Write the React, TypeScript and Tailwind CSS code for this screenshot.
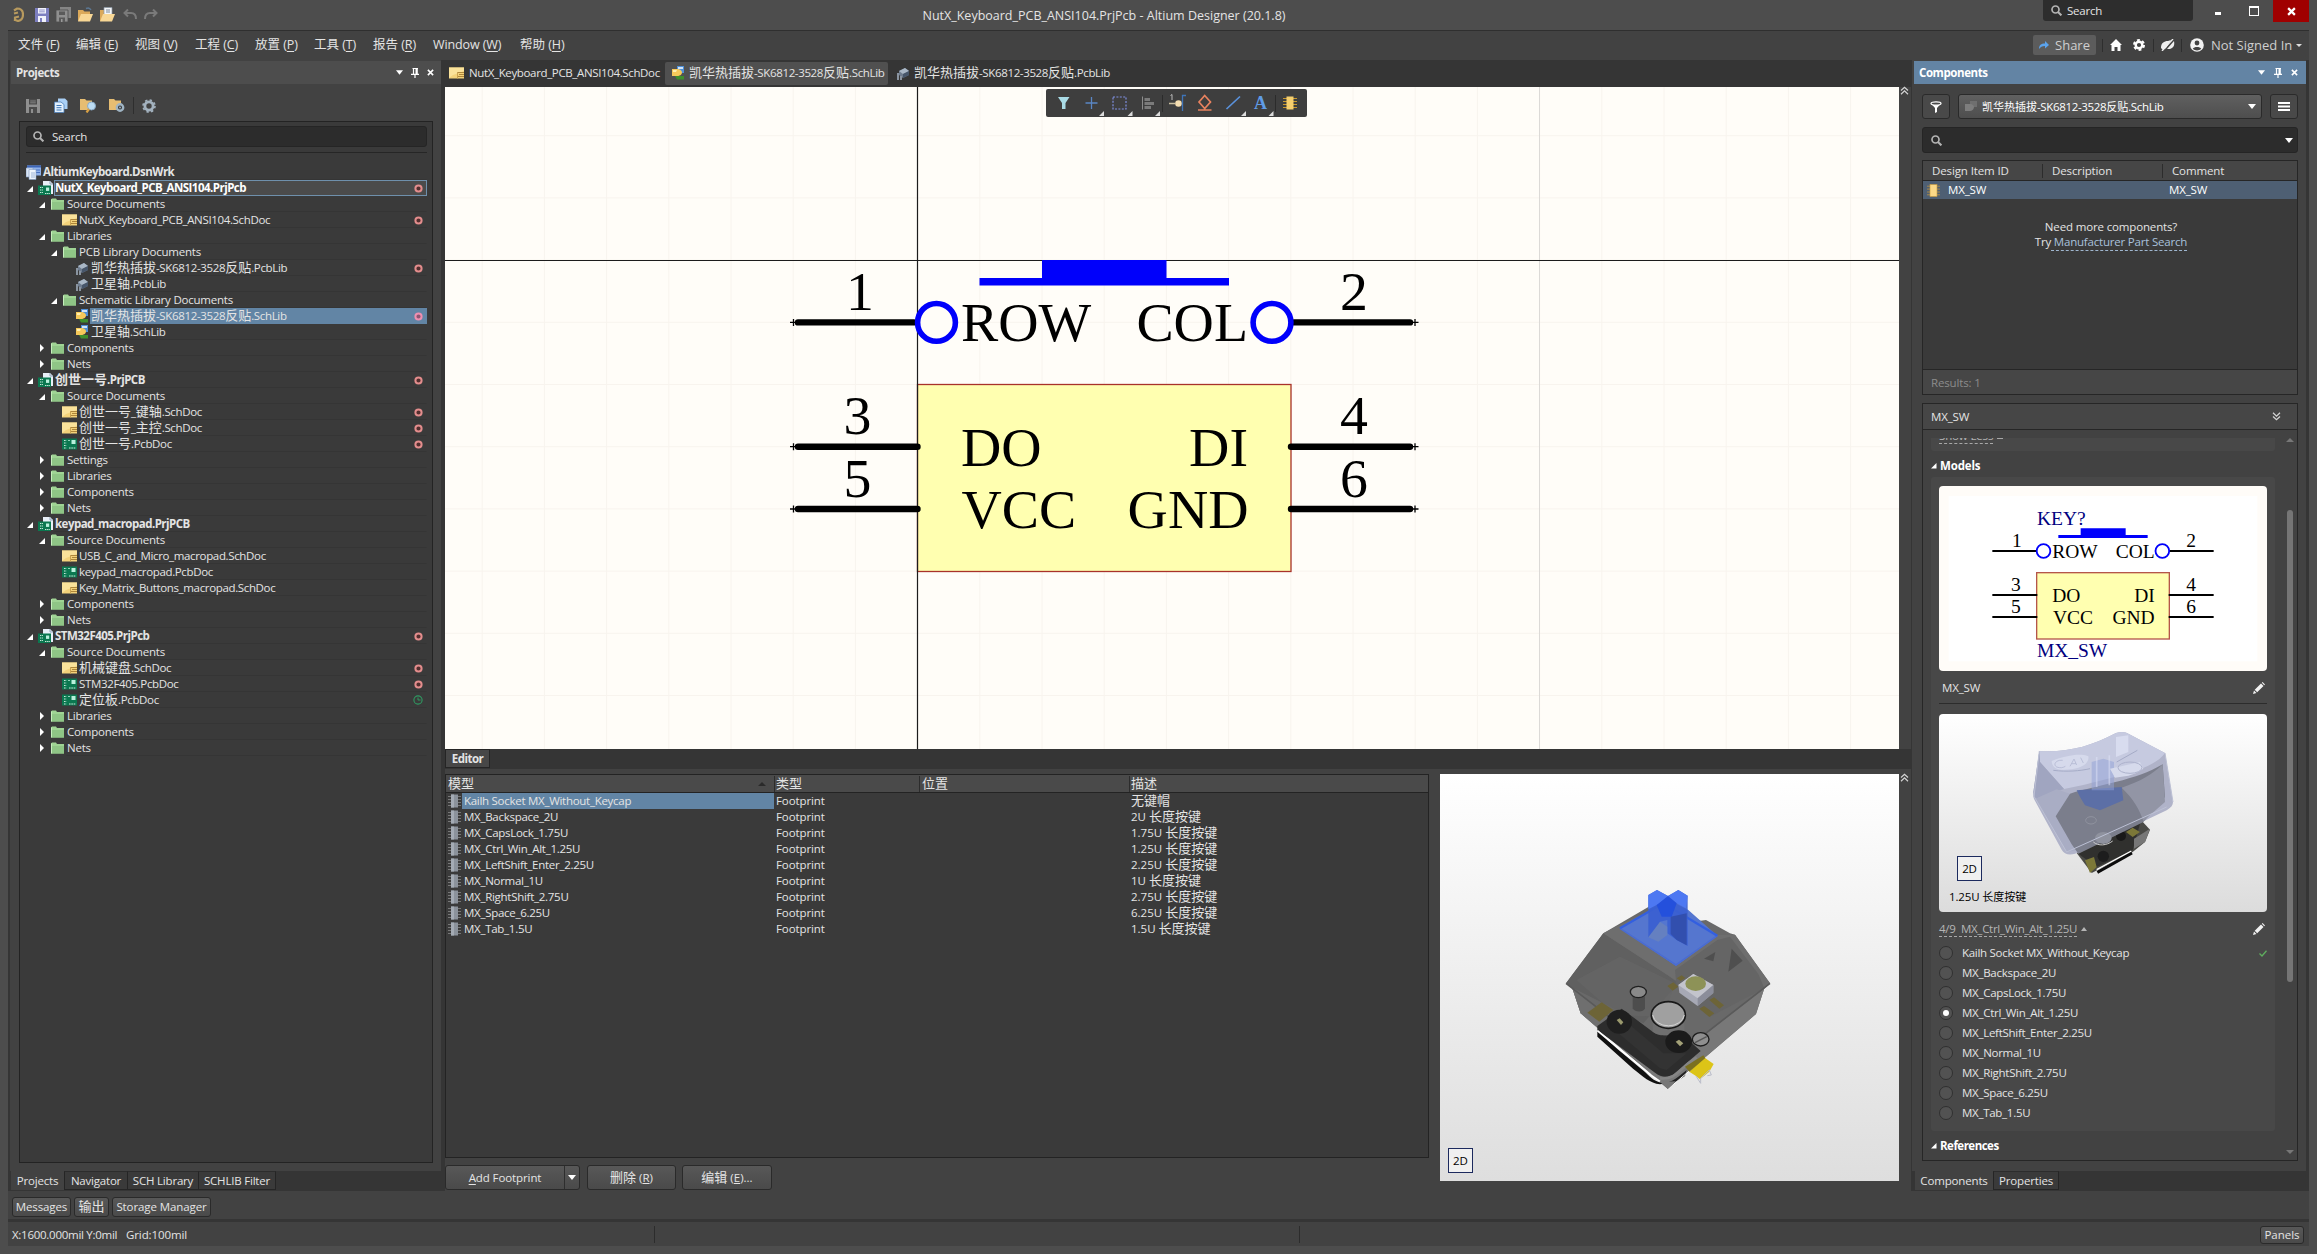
import React from "react";

type Kids = { children?: React.ReactNode };

/* Renders a label, giving Han characters their own size. */
function Mix({ s, han = "text-[13px]" }: { s: string; han?: string }) {
  return (
    <span className="whitespace-pre">
      {s.split(/([\u4e00-\u9fff]+)/).map((p, i) =>
        /[\u4e00-\u9fff]/.test(p) ? (
          <span key={i} className={`font-['Noto_Sans_CJK_SC',sans-serif] tracking-normal leading-none ${han}`}>{p}</span>
        ) : (
          p
        ),
      )}
    </span>
  );
}

function Svg({ w, h, vb, className = "", children }: { w: number; h: number; vb?: string; className?: string } & Kids) {
  return (
    <svg width={w} height={h} viewBox={vb ?? `0 0 ${w} ${h}`} className={`shrink-0 block ${className}`} fill="none">
      {children}
    </svg>
  );
}

/* ---------- small icons ---------- */
const Down = ({ c = "#fff", w = 8 }: { c?: string; w?: number }) => (
  <Svg w={w} h={5} vb="0 0 8 5"><path d="M0 0H8L4 5Z" fill={c} /></Svg>
);
const Pin = () => (
  <Svg w={8} h={10}><path d="M1.5 0.5H7M2.5 0.5V6M0 6.3H8M4 6.5V10" stroke="#fff" strokeWidth="1.2" /><path d="M4.5 0H6.8V6H4.5Z" fill="#fff" /></Svg>
);
const Cross = ({ s = 7, sw = 1.8 }: { s?: number; sw?: number }) => (
  <Svg w={s} h={s} vb="0 0 8 8"><path d="M1 1L7 7M7 1L1 7" stroke="#fff" strokeWidth={sw} /></Svg>
);
const Magnifier = ({ s = 11 }: { s?: number }) => (
  <Svg w={s} h={s} vb="0 0 11 11"><circle cx="4.5" cy="4.5" r="3.5" stroke="#b4b4b4" strokeWidth="1.7" /><path d="M7 7L10.4 10.4" stroke="#b4b4b4" strokeWidth="2" /></Svg>
);
const Folder = () => (
  <Svg w={13} h={12}><path d="M0 1.5L1 0.5H5L6 2H13V11.5H0Z" fill="#9fd394" /><path d="M1 4H13V11.5H1Z" fill="#8fc586" /><path d="M0.5 1.5V11.5" stroke="#c6eebd" /></Svg>
);
const SchIcon = () => (
  <Svg w={15} h={12}><path d="M0 0.5H15V11.5H0Z" fill="#f3d27a" /><path d="M0 0.5H15V4L4 8L0 11Z" fill="#fae29a" /><path d="M9 5.5H15M10 7.5H15M9 9.5H15" stroke="#a67d33" strokeWidth="0.9" /><path d="M8.5 5V11.5" stroke="#caa352" /></Svg>
);
const PcbIcon = () => (
  <Svg w={15} h={12}><rect y="0.5" width="15" height="11" fill="#0b7850" /><path d="M2 2.5H4.5M2 5H4.5M2 7.5H4.5M2 10H4.5M7 10H14" stroke="#c9eadb" strokeWidth="1.2" strokeDasharray="1.6 0.7" /><rect x="9.5" y="2" width="4" height="4" fill="#b9f0dc" /><path d="M6 2.5H8" stroke="#8fd0b8" /></Svg>
);
const PrjIcon = () => (
  <Svg w={15} h={15}><path d="M5 0H12L15 3V13H5Z" fill="#e9f0f8" /><path d="M12 0V3H15" stroke="#90a5bb" /><rect y="4.5" width="13" height="9.5" fill="#0b7850" /><path d="M2 6.5H5M2 9H5M2 11.5H5M7 12.5H12" stroke="#c9eadb" strokeWidth="1.1" strokeDasharray="1.4 0.7" /><rect x="8" y="6.5" width="3.2" height="3.4" fill="#b9f0dc" /></Svg>
);
const WrkIcon = () => (
  <Svg w={15} h={15}><rect x="1" y="0.5" width="14" height="10" fill="#8fb1ea" /><path d="M1 1.5H15" stroke="#3c64b6" strokeWidth="2" /><path d="M10 5H14M10 7.5H14" stroke="#4a72c0" /><path d="M0 3H7V12H0Z" fill="#dbe6f5" stroke="#7e98c0" strokeWidth=".6" /><path d="M3 4.5H10V14.5H3Z" fill="#eef4fc" stroke="#7e98c0" strokeWidth=".6" /><path d="M5 8H9M5 10H9M5 12H9" stroke="#8ba6cf" strokeWidth=".8" /></Svg>
);
const PcbLibIcon = () => (
  <Svg w={14} h={13}><path d="M3 4L9 1L13 4V8L7 11L3 8Z" fill="#6e7c8e" /><path d="M3 4L9 1L13 4L7 7Z" fill="#a9b7c6" /><path d="M7 7V11L13 8V4Z" fill="#47566a" /><path d="M1 6H3V13H1ZM4 9H6V13H4Z" fill="#8a94a0" /></Svg>
);
const SchLibIcon = () => (
  <Svg w={14} h={14}><path d="M6 0H13V7H6Z" fill="#4f8fd6" /><path d="M7 1H12V3H7Z" fill="#cfe4fa" /><path d="M1 3H6C10 3 11 5.5 11 6.5C11 7.5 10 10 6 10H1Z" fill="#f6c95a" /><path d="M2 4H6L5 6H2Z" fill="#fff0b0" /><path d="M4 10H13V13.5H6Z" fill="#3f8f2c" /></Svg>
);
const GreyChip = () => (
  <Svg w={13} h={14}><path d="M0 2.5H13M0 5.5H13M0 8.5H13M0 11.5H13" stroke="#777" /><rect x="3" y="0.5" width="7" height="13" fill="#8b929b" /><rect x="3" y="0.5" width="3" height="13" fill="#a4abb4" /></Svg>
);
const GoldChip = ({ w = 13, h = 13 }: { w?: number; h?: number }) => (
  <Svg w={w} h={h} vb="0 0 13 13"><path d="M0 2.2H13M0 5.1H13M0 8H13M0 10.8H13" stroke="#a8894a" strokeWidth="1" /><rect x="3" y="0.5" width="7" height="12" fill="#fbd987" stroke="#c79a3c" strokeWidth=".6" /></Svg>
);
const Disk = ({ c, c2 }: { c: string; c2: string }) => (
  <Svg w={14} h={14}><path d="M0 0H14V14H0Z" fill={c} /><path d="M3 0H11V5.5H3Z" fill={c2} /><path d="M4.2 2H9.8M4.2 3.8H9.8" stroke={c} strokeWidth=".8" /><path d="M3 8H11V14H3Z" fill={c2} /><path d="M5 10H7V14H5Z" fill={c} /></Svg>
);
const OpenFolder = ({ doc = false }: { doc?: boolean }) => (
  <Svg w={15} h={15}><path d="M0 3H5L6.5 4.5H12V14H0Z" fill="#dba95a" />{doc ? <path d="M4 0.5H12V9H4Z" fill="#f4f6f8" stroke="#8a97a5" strokeWidth=".7" /> : <path d="M8 1.5C10 0.5 12 1 13 3" stroke="#5c7894" strokeWidth="1.4" />}{doc && <path d="M6 3H10M6 5H10" stroke="#6f8093" strokeWidth=".9" />}<path d="M3 7H15L12 14.5H0Z" fill="#f8d795" /></Svg>
);
const DotRed = ({ sel = false }: { sel?: boolean }) => (
  <Svg w={9} h={9}><circle cx="4.5" cy="4.5" r="3.1" stroke={sel ? "#ef8fb0" : "#e38d8d"} strokeWidth="2" fill={sel ? "#8d5673" : "#532f2f"} /></Svg>
);
const Clock = () => (
  <Svg w={10} h={10}><circle cx="5" cy="5" r="4.1" stroke="#2f9a62" strokeWidth="1.1" /><path d="M5 2.5V5H7.6" stroke="#2f9a62" /></Svg>
);
const Chev = ({ up = false }: { up?: boolean }) => (
  <Svg w={9} h={9} className={up ? "" : "rotate-180"}><path d="M1 4.5L4.5 1.2L8 4.5M1 8.2L4.5 4.9L8 8.2" stroke="#d5d5d5" strokeWidth="1.2" /></Svg>
);
const Pencil = () => (
  <Svg w={12} h={12}><path d="M0 12L1 8.5L3.5 11ZM1.7 7.8L8 1.5L10.5 4L4.2 10.3ZM8.8 0.8L9.6 0L12 2.4L11.2 3.2Z" fill="#f2f2f2" /></Svg>
);

/* ---------- project tree ---------- */
type Kind = "wrk" | "prj" | "dir" | "sch" | "pcb" | "plib" | "slib";
type Row = { t: string; k: Kind; d: number; a?: "o" | "c"; m?: "r" | "g"; st?: "act" | "sel" };
const tree: Row[] = [
  { t: "AltiumKeyboard.DsnWrk", k: "wrk", d: 0 },
  { t: "NutX_Keyboard_PCB_ANSI104.PrjPcb", k: "prj", d: 1, a: "o", m: "r", st: "act" },
  { t: "Source Documents", k: "dir", d: 2, a: "o" },
  { t: "NutX_Keyboard_PCB_ANSI104.SchDoc", k: "sch", d: 3, m: "r" },
  { t: "Libraries", k: "dir", d: 2, a: "o" },
  { t: "PCB Library Documents", k: "dir", d: 3, a: "o" },
  { t: "凯华热插拔-SK6812-3528反贴.PcbLib", k: "plib", d: 4, m: "r" },
  { t: "卫星轴.PcbLib", k: "plib", d: 4 },
  { t: "Schematic Library Documents", k: "dir", d: 3, a: "o" },
  { t: "凯华热插拔-SK6812-3528反贴.SchLib", k: "slib", d: 4, m: "r", st: "sel" },
  { t: "卫星轴.SchLib", k: "slib", d: 4 },
  { t: "Components", k: "dir", d: 2, a: "c" },
  { t: "Nets", k: "dir", d: 2, a: "c" },
  { t: "创世一号.PrjPCB", k: "prj", d: 1, a: "o", m: "r" },
  { t: "Source Documents", k: "dir", d: 2, a: "o" },
  { t: "创世一号_键轴.SchDoc", k: "sch", d: 3, m: "r" },
  { t: "创世一号_主控.SchDoc", k: "sch", d: 3, m: "r" },
  { t: "创世一号.PcbDoc", k: "pcb", d: 3, m: "r" },
  { t: "Settings", k: "dir", d: 2, a: "c" },
  { t: "Libraries", k: "dir", d: 2, a: "c" },
  { t: "Components", k: "dir", d: 2, a: "c" },
  { t: "Nets", k: "dir", d: 2, a: "c" },
  { t: "keypad_macropad.PrjPCB", k: "prj", d: 1, a: "o" },
  { t: "Source Documents", k: "dir", d: 2, a: "o" },
  { t: "USB_C_and_Micro_macropad.SchDoc", k: "sch", d: 3 },
  { t: "keypad_macropad.PcbDoc", k: "pcb", d: 3 },
  { t: "Key_Matrix_Buttons_macropad.SchDoc", k: "sch", d: 3 },
  { t: "Components", k: "dir", d: 2, a: "c" },
  { t: "Nets", k: "dir", d: 2, a: "c" },
  { t: "STM32F405.PrjPcb", k: "prj", d: 1, a: "o", m: "r" },
  { t: "Source Documents", k: "dir", d: 2, a: "o" },
  { t: "机械键盘.SchDoc", k: "sch", d: 3, m: "r" },
  { t: "STM32F405.PcbDoc", k: "pcb", d: 3, m: "r" },
  { t: "定位板.PcbDoc", k: "pcb", d: 3, m: "g" },
  { t: "Libraries", k: "dir", d: 2, a: "c" },
  { t: "Components", k: "dir", d: 2, a: "c" },
  { t: "Nets", k: "dir", d: 2, a: "c" },
];
const indent = ["w-0", "w-0", "w-[12px]", "w-[24px]", "w-[36px]"];
const icons: Record<Kind, React.ReactNode> = {
  wrk: <WrkIcon />, prj: <PrjIcon />, dir: <Folder />, sch: <SchIcon />, pcb: <PcbIcon />, plib: <PcbLibIcon />, slib: <SchLibIcon />,
};

function TreeRow({ r }: { r: Row }) {
  const bold = r.k === "wrk" || r.k === "prj";
  const box =
    r.st === "act" ? "border border-[#6f90ac] bg-[#4b4b4b] text-white" : r.st === "sel" ? "bg-[#6285a5] border border-[#6285a5]" : "border border-transparent border-b-[#353535]";
  const track = bold ? "font-bold tracking-[-0.52px]" : r.k === "dir" ? "tracking-[-0.22px]" : "tracking-[-0.35px]";
  return (
    <div className="flex h-[16px] items-center">
      {r.d > 0 && (
        <>
          <span className={`shrink-0 ${indent[r.d]}`} />
          <span className="flex w-[12px] shrink-0 items-center pl-[2px]">
            {r.a === "o" && <Svg w={6} h={6} className="mt-[2px]"><path d="M6 0V6H0Z" fill="#fff" /></Svg>}
            {r.a === "c" && <Svg w={4} h={8} className="ml-px"><path d="M0 0L4 4L0 8Z" fill="#fff" /></Svg>}
          </span>
        </>
      )}
      <span className={`flex shrink-0 items-center justify-center ${r.d > 0 ? "w-[17px]" : "w-[16px] pl-px"}`}>{icons[r.k]}</span>
      <span className={`flex h-[16px] min-w-0 flex-1 items-center justify-between pr-[3px] ${r.d > 0 ? "pl-0" : "pl-px"} ${box} ${track}`}>
        <Mix s={r.t} />
        {r.m === "r" && <DotRed sel={r.st === "sel"} />}
        {r.m === "g" && <Clock />}
      </span>
    </div>
  );
}

const tabOn = "flex h-[19px] items-center justify-center bg-[#424242]";
const tabOff = "flex h-[19px] items-center justify-center border border-[#252525] border-t-[#2c2c2c] bg-[#3a3a3a]";
const btn = "flex items-center justify-center rounded-[3px] border border-[#2a2a2a] bg-linear-to-b from-[#585858] to-[#4a4a4a]";

function ProjectsPanel() {
  return (
    <div className="flex w-[431px] shrink-0 flex-col bg-[#424242]">
      <div className="ml-px mt-px flex h-[23px] shrink-0 items-center bg-[#4d4d4d] pl-[5px] pr-[7px] font-bold">
        <span className="flex-1 tracking-[-0.4px]">Projects</span>
        <span className="flex items-center gap-[8px]"><Down w={7} /><Pin /><Cross /></span>
      </div>
      <div className="flex h-[37px] shrink-0 items-center pt-[6px] pl-[16px]">
        <Disk c="#8f8f8f" c2="#4b4b4b" />
        <Svg w={14} h={15} className="ml-[14px]"><path d="M4 0.5H11L13.5 3V11H4Z" fill="#a9cff5" /><path d="M0.5 4H7L10 6.5V14.5H0.5Z" fill="#e2f0fd" stroke="#4d7fb8" strokeWidth=".8" /><path d="M2.5 7.5H7.5M2.5 9.7H7.5M2.5 12H7.5" stroke="#3f78b7" /></Svg>
        <Svg w={17} h={15} className="ml-[12px]"><path d="M0 1H5L6.5 2.5H12V12H0Z" fill="#e6bd72" /><circle cx="11.5" cy="8" r="4" fill="#bcdcf3" stroke="#89a9c4" /><path d="M9 11L6.5 14.5" stroke="#d7a045" strokeWidth="2.2" /></Svg>
        <Svg w={17} h={15} className="ml-[12px]"><path d="M0 1H5L6.5 2.5H12V12H0Z" fill="#e6bd72" /><circle cx="11" cy="9.5" r="3.2" stroke="#9fb4c4" strokeWidth="2.4" fill="#333" /><circle cx="11" cy="9.500" r="1" fill="#9fb4c4" /></Svg>
        <span className="ml-[7px] h-[17px] w-px bg-[#2e2e2e]" />
        <Svg w={14} h={14} className="ml-[8px]"><circle cx="7" cy="7" r="4.1" stroke="#a3b2bf" strokeWidth="2.8" /><circle cx="7" cy="7" r="6" stroke="#a3b2bf" strokeWidth="1.6" strokeDasharray="2.4 2.3" /></Svg>
      </div>
      <div className="ml-[9px] flex h-[1042px] w-[414px] shrink-0 flex-col border border-[#232323] bg-[#3a3a3a] pl-[6px] pr-[5px] pt-[4px]">
        <div className="flex h-[21px] shrink-0 items-center gap-[8px] rounded-[3px] border border-[#252525] bg-[#2c2c2c] pl-[6px] tracking-[-0.2px]">
          <Magnifier /><span>Search</span>
        </div>
        <div className="mt-[5px] h-[13px] shrink-0 border-t border-[#262626]" />
        <div className="-ml-px -mt-px flex flex-col">{tree.map((r, i) => <TreeRow key={i} r={r} />)}</div>
      </div>
      <div className="mt-[8px] flex h-[20px] shrink-0 bg-[#353535] pl-px tracking-[-0.2px]">
        <span className={`${tabOn} w-[53px]`}>Projects</span>
        <span className={`${tabOff} w-[64px]`}>Navigator</span>
        <span className={`${tabOff} -ml-px w-[72px]`}>SCH Library</span>
        <span className={`${tabOff} -ml-px w-[78px]`}>SCHLIB Filter</span>
      </div>
    </div>
  );
}

/* ---------- schematic sheet ---------- */
const gx = Array.from({ length: 24 }, (_, i) => 482.2 + i * 62.2);
const gy = Array.from({ length: 11 }, (_, i) => 135.7 + i * 62.2);

function PinLine({ x1, x2, y, tip }: { x1: number; x2: number; y: number; tip: number }) {
  return (
    <g stroke="#000">
      <line x1={x1} x2={x2} y1={y} y2={y} strokeWidth="6.4" strokeLinecap="round" />
      <path d={`M${tip - 3.5} ${y}H${tip + 3.5}M${tip} ${y - 3.5}V${y + 3.5}`} strokeWidth="1.3" />
    </g>
  );
}

function Sheet() {
  return (
    <Svg w={1454} h={662} vb="445 87 1454 662" className="bg-[#fffdf8]">
      <g stroke="#f8f4ee" strokeWidth="1">
        {gx.map((x) => <line key={x} x1={x} x2={x} y1="87" y2="749" />)}
        {gy.map((y) => <line key={y} x1="445" x2="1899" y1={y} y2={y} />)}
      </g>
      <line x1="1539.5" x2="1539.5" y1="87" y2="749" stroke="#dcdad7" />
      <rect x="917.5" y="384.5" width="373.5" height="187" fill="#ffffb0" stroke="#a8322a" strokeWidth="1.3" />
      <path d="M445 260.5H1899M917.5 87V749" stroke="#1c1c1c" strokeWidth="1.2" />
      <path d="M1042 260H1166.5V278H1229V285.6H979.5V278H1042Z" fill="#0000fb" />
      <PinLine x1={798} x2={914} y={322.4} tip={793.5} />
      <PinLine x1={798} x2={917.5} y={446.7} tip={793.5} />
      <PinLine x1={798} x2={917.5} y={509} tip={793.5} />
      <PinLine x1={1294} x2={1410} y={322.4} tip={1415} />
      <PinLine x1={1291} x2={1410} y={446.7} tip={1415} />
      <PinLine x1={1291} x2={1410} y={509} tip={1415} />
      <g stroke="#0000fb" strokeWidth="5.6" fill="#fffdf8"><circle cx="936.5" cy="322.4" r="18.9" /><circle cx="1272" cy="322.4" r="18.9" /></g>
      <g fill="#000" fontFamily="'Liberation Serif', serif" fontSize="55.8">
        <text x="846" y="310">1</text><text x="843.5" y="434.3">3</text><text x="843.5" y="496.500">5</text>
        <text x="1340" y="310">2</text><text x="1340" y="434.3">4</text><text x="1340" y="496.500">6</text>
        <text x="961" y="340.8">ROW</text><text x="961" y="465.500">DO</text><text x="961.500" y="527.800">VCC</text>
        <g textAnchor="end"><text x="1248" y="340.8">COL</text><text x="1248" y="465.500">DI</text><text x="1248.500" y="527.800">GND</text></g>
      </g>
    </Svg>
  );
}

function ActiveBar() {
  const c = "M0 5L5 0V5Z";
  return (
    <div className="absolute left-[601px] top-[2px]">
      <Svg w={261} h={28} vb="1046 89 261 28" className="rounded-[2px] bg-[#3e3e3e]">
        <path d="M1058 97H1069.5L1065.5 103V109H1062V103Z" fill="#a9dbe6" />
        <path d="M1085.5 103H1097.5M1091.5 97V109" stroke="#5a86c4" strokeWidth="1.3" />
        <rect x="1113" y="97" width="13" height="12" stroke="#7f8fe0" strokeWidth="1.2" strokeDasharray="2 1.4" />
        <path d="M1142.5 96.5V109.5" stroke="#8c8c8c" /><path d="M1144.5 98H1150V101H1144.5ZM1144.5 102H1154V105H1144.5ZM1144.5 106H1151V109H1144.5Z" fill="#7b7b7b" />
        <path d="M1162.5 95V112M1275.5 95V112" stroke="#2b2b2b" />
        <path d="M1169 103.5H1175" stroke="#c9bfa0" strokeWidth="1.4" /><circle cx="1178.5" cy="103.5" r="3.3" fill="#f4ddb0" /><path d="M1170.5 95.5L1172 94.5V100" stroke="#bbb" /><path d="M1186 95.5H1182.5V111" stroke="#3f74b8" strokeWidth="1.3" />
        <path d="M1204.7 95.5L1210.5 102L1204.7 108.5L1199 102ZM1198 110H1211.5M1204.7 108V110" stroke="#e8825f" strokeWidth="1.7" />
        <path d="M1226.5 109L1240 96.5" stroke="#5a92dc" strokeWidth="1.7" />
        <text x="1254" y="109" fontFamily="'Liberation Serif', serif" fontWeight="700" fontSize="18" fill="#5f9be6">A</text>
        <g transform="translate(1283 96)"><path d="M0 2.5H14M0 5.5H14M0 8.5H14M0 11.5H14" stroke="#c9992f" /><rect x="3.5" y=".5" width="7" height="13" fill="#f6cf6e" /></g>
        {[1099, 1127.5, 1155, 1241, 1268.5].map((x) => <path key={x} transform={`translate(${x} 111)`} d={c} fill="#dcdcdc" />)}
      </Svg>
    </div>
  );
}

/* ---------- 3D models ---------- */
function SwitchModel() {
  return (
    <Svg w={459} h={407} vb="30 12 1377 1221">
      <path d="M520 490L660 408L775 425L785 440L812 452L828 450L900 490L915 494L1020 640L1003 655L978 732L714 957L452 730L427 655L408 640Z" fill="#696969" />
      <path d="M520 490L714 616L745 640L640 760L430 655L408 640Z" fill="#606060" />
      <path d="M520 490L735 630L1003 655L1020 640L915 494L862 495L738 588L570 475L640 430Z" fill="#6e6e6e" />
      <path d="M735 600L862 510L900 500L985 612L1003 655L840 740L740 650Z" fill="#656565" />
      <path d="M427 655L714 880L1003 655L978 732L714 957L452 730Z" fill="#787878" />
      <path d="M427 655L452 730L500 770L600 790Z" fill="#6f6f6f" />
      <path d="M440 630L570 560L735 640L700 740L560 735Z" fill="#676767" fillOpacity=".7" />
      <path d="M408 640L714 878L1020 640" stroke="#5a5a5a" strokeWidth="5" />
      <path d="M660 400L690 376L775 420L862 497L738 588L570 475L655 425Z" fill="#5576cf" />
      <path d="M570 475L738 585L862 497" stroke="#4a6cd2" strokeWidth="5" />
      <path d="M570 475L700 400L862 497" stroke="#335fe0" strokeWidth="7" />
      <path d="M655 375L681 360L714 378L745 360L773 377V528L740 510L712 490V450L690 455L685 485L655 502Z" fill="#3a5fd0" fillOpacity=".9" />
      <path d="M655 375L681 360L714 378L745 360L773 377L768 415L740 400L714 378L690 400L655 418Z" fill="#4d78f2" />
      <path d="M714 378L740 400L725 440L695 440L680 405Z" fill="#2450dc" />
      <path d="M722 440L770 430V526L740 510L722 492Z" fill="#324fae" />
      <path d="M655 502L690 455L712 470V495L685 515Z" fill="#6580c0" />
      <path d="M905 536L938 572L895 605ZM822 566L856 546L850 574Z" fill="#4f4f4f" />
      <path d="M472 728L515 697L550 720L508 755ZM712 648L730 637L745 650L728 662ZM740 625L755 616L766 624L752 633ZM808 716L822 708L853 730L838 741ZM838 690L852 682L882 706L868 716Z" fill="#6d6437" />
      <path d="M745 645L790 612L850 645L850 668L803 708L748 668Z" fill="#a7a9b5" /><path d="M745 645L790 612L850 645L803 685Z" fill="#c3c4cc" /><path d="M803 685L850 645V670L803 708Z" fill="#8b8d9a" />
      <ellipse cx="797" cy="641" rx="31" ry="22" fill="#8d9257" />
      <path d="M502 768L575 716L668 785C685 800 720 800 745 782L812 843L728 915C710 925 690 920 675 908L502 780Z" fill="#2d2d2d" />
      <path d="M530 760L568 738L700 850L770 850L710 900L690 895Z" fill="#333" />
      <path d="M608 680H645V715C640 728 615 728 608 715Z" fill="#4d4d4d" /><ellipse cx="625" cy="666" rx="24" ry="17" fill="#898989" stroke="#202020" strokeWidth="4" />
      <path d="M668 760H763V785C740 800 690 800 668 785Z" fill="#6f6f6f" /><ellipse cx="715" cy="735" rx="51" ry="40" fill="#a0a0a0" stroke="#191919" strokeWidth="5" />
      <path d="M668 735A48 38 0 0 0 763 735" stroke="#d4d4d4" strokeWidth="3" />
      <ellipse cx="568" cy="755" rx="38" ry="36" fill="#1f1f1f" /><path d="M560 750L569 745L580 757L573 765Z" fill="#9b9a6e" />
      <ellipse cx="746" cy="815" rx="40" ry="34" fill="#1b1b1b" /><path d="M737 815L747 809L760 820L750 829Z" fill="#a3a178" />
      <ellipse cx="812" cy="808" rx="25" ry="20" fill="#8f8f8f" stroke="#1d1d1d" strokeWidth="4" /><path d="M795 818L830 800" stroke="#555" strokeWidth="4" />
      <path d="M502 780C560 840 630 890 660 920C675 935 700 942 714 940L690 943C660 940 640 920 610 897L502 800Z" fill="#101010" />
      <path d="M502 782C560 832 630 885 664 916L690 934" stroke="#fff" strokeWidth="5" />
      <path d="M690 925C730 930 745 905 775 880L800 862" stroke="#858585" strokeWidth="8" />
      <path d="M690 938C720 945 745 920 770 900L765 918L714 950Z" fill="#222" />
      <path d="M714 957L826 862" stroke="#fff" strokeWidth="3" />
      <path d="M690 936L738 934L714 957Z" fill="#777" />
      <path d="M778 905L822 862L851 882L838 905L810 928L798 918Z" fill="#dcc417" /><path d="M798 918L812 940V925L838 900L844 915L832 917" stroke="#b9bcc9" strokeWidth="3" /><path d="M765 890L820 856L826 864L778 905Z" fill="#7b7020" />
    </Svg>
  );
}

function KeycapModel() {
  return (
    <Svg w={328} h={198} vb="87 71 984 594">
      <path d="M500 488L680 375L720 418L705 455L668 485L545 548Z" fill="#4a4a46" />
      <path d="M505 490L690 400L668 480L560 530Z" fill="#30302e" />
      <path d="M525 510L552 500L560 530L540 548ZM648 425L668 412L690 425L668 440Z" fill="#7c7838" />
      <path d="M672 445L720 415L705 455L672 475Z" fill="#777" />
      <circle cx="580" cy="498" r="17" fill="#1d1d1d" /><circle cx="633" cy="437" r="15" fill="#191919" />
      <path d="M562 546L666 488" stroke="#0c0c0c" strokeWidth="9" /><path d="M560 538L664 482" stroke="#fff" strokeWidth="4" />
      <path d="M388 182C480 186 540 168 618 128C635 123 645 124 658 132L765 188L789 335C789 345 783 352 770 360L495 490C475 496 462 490 455 478L374 330C370 322 369 315 370 305Z" fill="#b0b3c9" />
      <path d="M388 182C480 186 540 168 618 128C635 123 645 124 658 132L765 188C730 240 600 262 520 284L462 296L390 215Z" fill="#c6cae0" />
      <path d="M388 182L390 215L462 296L376 325L370 305Z" fill="#a0a5c0" />
      <path d="M376 325L440 297L480 310L437 378L500 480L470 485Z" fill="#a9adc4" />
      <path d="M480 310C560 285 680 270 758 222L765 320L700 395L505 490L485 462L437 378Z" fill="#7b7e8c" />
      <path d="M635 292C690 275 730 250 758 222L765 335L700 392C690 360 670 325 635 292Z" fill="#9295a5" />
      <path d="M500 300L635 290L640 330L570 360L525 345L510 320Z" fill="#5c6fa6" />
      <path d="M545 215L580 205L612 215V300H545Z" fill="#8f9fd6" fillOpacity=".5" />
      <path d="M560 200V290M598 195V285" stroke="#dfe4f7" strokeWidth="5" strokeOpacity=".5" />
      <path d="M618 140L655 135V185L618 200Z" fill="#e4e8f8" fillOpacity=".6" />
      <path d="M425 212C470 195 510 188 535 198C540 225 500 240 455 238C435 238 425 225 425 212ZM600 235L690 215L700 235C670 258 640 258 615 262Z" fill="#d6daec" />
      <path d="M458 210C438 208 428 222 440 230C450 234 460 232 466 228M480 228L492 206L500 224M485 220H498M512 202L520 218" stroke="#b3b8d2" strokeWidth="2.5" />
      <ellipse cx="660" cy="232" rx="36" ry="17" stroke="#adb2cc" strokeWidth="3" />
      <path d="M620 215L682 180M430 240C470 245 510 242 540 235" stroke="#a5abc6" strokeWidth="3" />
      <ellipse cx="543" cy="390" rx="16" ry="11" stroke="#90939f" strokeWidth="3" /><ellipse cx="580" cy="443" rx="25" ry="18" fill="#8f929e" />
      <path d="M550 455C565 468 590 466 608 452" stroke="#ccc" strokeWidth="3" />
      <path d="M765 188L789 335M388 182L372 318L470 485L770 350" stroke="#bcc0d4" strokeWidth="3" />
    </Svg>
  );
}

function SymbolPreview() {
  return (
    <Svg w={328} h={185} vb="87 288 984 555">
      <rect x="116" y="318" width="926" height="496" fill="#fff" />
      <rect x="380" y="548" width="398" height="199" fill="#ffffb0" stroke="#b5564a" strokeWidth="4" />
      <path d="M512 415H647V435H713V444H445V435H512Z" fill="#0000fb" />
      <path d="M247 483H378M247 615H382M247 681H382M779 483H911M776 615H911M776 681H911" stroke="#000" strokeWidth="6" />
      <g stroke="#0000fb" strokeWidth="5.5"><circle cx="400.5" cy="483" r="20.5" /><circle cx="757" cy="483" r="20.5" /></g>
      <g fontFamily="'Liberation Serif', serif" fontSize="58.5" fill="#000">
        <text x="306" y="472">1</text><text x="303" y="603">3</text><text x="303" y="669">5</text>
        <text x="829" y="472">2</text><text x="829" y="603">4</text><text x="829" y="669">6</text>
        <text x="427" y="504">ROW</text><text x="427" y="636">DO</text><text x="429" y="702">VCC</text>
        <g textAnchor="end"><text x="734" y="504">COL</text><text x="734" y="636">DI</text><text x="734" y="702">GND</text></g>
        <g fill="#000080"><text x="381" y="405">KEY?</text><text x="381" y="801">MX_SW</text></g>
      </g>
    </Svg>
  );
}

const Badge2D = () => (
  <span className="flex h-[25px] w-[25px] items-center justify-center border border-[#1c2a5e] bg-[#f0f0f0] text-black">2D</span>
);

/* ---------- centre ---------- */
const models: [string, string][] = [
  ["Kailh Socket MX_Without_Keycap", "无键帽"],
  ["MX_Backspace_2U", "2U 长度按键"],
  ["MX_CapsLock_1.75U", "1.75U 长度按键"],
  ["MX_Ctrl_Win_Alt_1.25U", "1.25U 长度按键"],
  ["MX_LeftShift_Enter_2.25U", "2.25U 长度按键"],
  ["MX_Normal_1U", "1U 长度按键"],
  ["MX_RightShift_2.75U", "2.75U 长度按键"],
  ["MX_Space_6.25U", "6.25U 长度按键"],
  ["MX_Tab_1.5U", "1.5U 长度按键"],
];

function Centre() {
  return (
    <div className="ml-[4px] flex w-[1466px] shrink-0 flex-col">
      <div className="flex h-[27px] shrink-0 items-center pb-px tracking-[-0.36px]">
        <span className="flex w-[220px] items-center gap-[5px] pl-[4px]"><SchIcon /><Mix s="NutX_Keyboard_PCB_ANSI104.SchDoc" /></span>
        <span className="flex h-[23px] w-[223px] items-center gap-[4px] rounded-[2px] bg-[#505050] pl-[6px]"><SchLibIcon /><Mix s="凯华热插拔-SK6812-3528反贴.SchLib" /></span>
        <span className="flex items-center gap-[4px] pl-[8px]"><PcbLibIcon /><Mix s="凯华热插拔-SK6812-3528反贴.PcbLib" /></span>
      </div>
      <div className="flex h-[662px] shrink-0">
        <div className="relative w-[1454px]"><Sheet /><ActiveBar /></div>
        <div className="flex w-[12px] justify-center bg-[#424242] pr-[2px]"><div className="-mt-px"><Chev up /></div></div>
      </div>
      <div className="flex h-[20px] shrink-0">
        <span className="flex h-[19px] w-[45px] items-center justify-center border border-[#252525] bg-[#474747] font-bold tracking-[-0.5px]">Editor</span>
      </div>
      <div className="flex h-[422px] bg-[#424242] pt-[5px]">
        <div className="flex w-[984px] shrink-0 flex-col">
          <div className="flex h-[384px] flex-col border border-[#232323] bg-[#3a3a3a]">
            <div className="flex h-[18px] shrink-0 items-center border-b border-[#232323] bg-[#4a4a4a]">
              <span className="flex w-[328px] items-center justify-between pl-[2px] pr-[8px]"><Mix s="模型" /><Svg w={8} h={4}><path d="M0 4L4 0L8 4Z" fill="#2a2a2a" /></Svg></span>
              <span className="w-[145px] border-l border-[#2c2c2c] pl-px leading-[16px]"><Mix s="类型" /></span>
              <span className="w-[210px] border-l border-[#2c2c2c] pl-[2px] leading-[16px]"><Mix s="位置" /></span>
              <span className="border-l border-[#2c2c2c] pl-px leading-[16px]"><Mix s="描述" /></span>
            </div>
            {models.map(([n, d], i) => (
              <div key={n} className="flex h-[16px] shrink-0 items-center">
                <span className="w-[16px] shrink-0 pl-[2px]"><GreyChip /></span>
                <span className={`flex h-[16px] w-[312px] items-center pl-[2px] tracking-[-0.28px] ${i === 0 ? "bg-[#6285a5]" : ""}`}><Mix s={n} /></span>
                <span className="w-[357px] pl-[2px] tracking-[-0.1px]">Footprint</span>
                <Mix s={d} />
              </div>
            ))}
          </div>
          <div className="mt-[7px] flex h-[25px]">
            <span className={`${btn} w-[135px]`}>
              <span className="flex-1 text-center tracking-[-0.1px]"><u className="underline-offset-2">A</u>dd Footprint</span>
              <span className="flex h-full w-[15px] items-center justify-center border-l border-[#2e2e2e]"><Down w={8} /></span>
            </span>
            <span className={`${btn} ml-[7px] w-[89px]`}><Mix s="删除 (" /><u>R</u>)</span>
            <span className={`${btn} ml-[6px] w-[90px]`}><Mix s="编辑 (" /><u>E</u>)...</span>
          </div>
        </div>
        <div className="ml-[11px] flex h-[407px] w-[459px] shrink-0 bg-linear-to-b from-white to-[#dedede]">
          <div className="relative">
            <SwitchModel />
            <div className="absolute bottom-[8px] left-[8px]"><Badge2D /></div>
          </div>
        </div>
        <div className="-mt-px flex w-[12px] justify-center pr-[2px]"><Chev up /></div>
      </div>
    </div>
  );
}

/* ---------- components panel ---------- */
function ComponentsPanel() {
  const fieldBtn = "flex h-[25px] w-[28px] items-center justify-center rounded-[3px] border border-[#2a2a2a] bg-[#494949]";
  return (
    <div className="ml-px flex w-[394px] shrink-0 flex-col bg-[#424242] tracking-[-0.15px]">
      <div className="ml-[2px] mt-px flex h-[23px] shrink-0 items-center bg-[#6384a4] pl-[5px] pr-[8px] font-bold text-white">
        <span className="flex-1 tracking-[-0.42px]">Components</span>
        <span className="flex items-center gap-[9px]"><Down w={7} /><Pin /><Cross /></span>
      </div>
      <div className="mt-[10px] flex h-[25px] shrink-0 gap-[8px] pl-[10px]">
        <span className={fieldBtn}><Svg w={12} h={12}><path d="M1 2.5L5 7V12L7 11V7L11 2.5Z" fill="#fff" /><ellipse cx="6" cy="2.5" rx="5" ry="1.7" fill="#494949" stroke="#fff" strokeWidth="1.3" /></Svg></span>
        <span className="flex w-[304px] items-center rounded-[3px] border border-[#2a2a2a] bg-linear-to-b from-[#606060] to-[#4e4e4e] pl-[6px] pr-[5px]">
          <Svg w={12} h={11}><path d="M5 0H12V6H5Z" fill="#6f6f6f" /><path d="M0 3H5C8 3 9 5 9 6C9 7 8 10 5 10H0Z" fill="#7d7d7d" /></Svg>
          <span className="ml-[5px] flex-1 tracking-[-0.35px] text-white"><Mix s="凯华热插拔-SK6812-3528反贴.SchLib" han="text-[11px]" /></span>
          <Down w={8} />
        </span>
        <span className={fieldBtn}><Svg w={12} h={9}><path d="M0 1H12M0 4.5H12M0 8H12" stroke="#fff" strokeWidth="2" /></Svg></span>
      </div>
      <div className="ml-[10px] mt-[8px] flex h-[26px] w-[376px] shrink-0 items-center justify-between rounded-[3px] border border-[#252525] bg-[#2c2c2c] pl-[8px] pr-[4px]"><Magnifier /><Down w={8} /></div>
      <div className="ml-[10px] mt-[7px] flex h-[235px] w-[376px] shrink-0 flex-col border border-[#262626] bg-[#3a3a3a]">
        <div className="flex h-[20px] shrink-0 items-center border-b border-[#262626] bg-[#464646] tracking-[-0.12px]">
          <span className="w-[119px] pl-[9px]">Design Item ID</span>
          <span className="h-[14px] w-[120px] border-l border-[#2c2c2c] pl-[9px] leading-[13px]">Description</span>
          <span className="h-[14px] border-l border-[#2c2c2c] pl-[9px] leading-[13px]">Comment</span>
        </div>
        <div className="flex h-[18px] shrink-0 items-center bg-[#4e5f73] pl-[4px] text-white"><GoldChip /><span className="ml-[8px] w-[221px]">MX_SW</span><span>MX_SW</span></div>
        <div className="mt-[20px] flex-1 pl-[2px] text-center leading-[15px]">
          <div>Need more components?</div>
          <div className="tracking-[-0.2px]">Try<span className="border-b border-dashed border-[#9fb6cf] pb-px text-[#a9c1dc]"> Manufacturer Part Search</span></div>
        </div>
        <div className="flex h-[25px] shrink-0 items-center border-t border-[#262626] bg-[#464646] pl-[8px] pt-px text-[#8c8c8c]">Results: 1</div>
      </div>
      <div className="ml-[10px] mt-[8px] flex h-[758px] w-[376px] shrink-0 flex-col border border-[#262626]">
        <div className="flex h-[26px] shrink-0 items-center justify-between border-b border-[#262626] bg-[#464646] pl-[8px] pr-[16px]"><span>MX_SW</span><Chev /></div>
        <div className="flex flex-1 justify-between pr-[3px] pt-[8px]">
          <div className="ml-[8px] w-[344px]">
            <div className="h-[13px] overflow-hidden rounded-b-[3px] bg-[#484848] pl-[8px] text-[#b5b5b5]">
              <div className="-mt-[9px] flex h-[15px] items-center gap-1"><span className="border-b border-dashed border-[#a8a8a8] leading-[14px]">Show Less</span><span className="mt-[3px] h-px w-[6px] bg-[#a8a8a8]" /></div>
            </div>
            <div className="flex h-[26px] items-center gap-[3px] pt-[4px] font-bold text-white"><Svg w={6} h={6}><path d="M5.5 0V5.5H0Z" fill="#fff" /></Svg>Models</div>
            <div className="flex h-[654px] flex-col rounded-[3px] bg-[#484848] px-[8px] pt-[9px]">
              <div className="h-[185px] shrink-0 overflow-hidden rounded-[4px] bg-[#fffcf8]"><SymbolPreview /></div>
              <div className="flex h-[33px] shrink-0 items-center justify-between border-b border-[#2c2c2c] pl-[3px] pr-[2px] pt-px"><span>MX_SW</span><Pencil /></div>
              <div className="relative mt-[10px] h-[198px] shrink-0 overflow-hidden rounded-[4px] bg-linear-to-b from-white to-[#dcdcdc] text-black">
                <KeycapModel />
                <div className="absolute bottom-[31px] left-[18px]"><Badge2D /></div>
                <div className="absolute bottom-[7px] left-[10px]"><Mix s="1.25U 长度按键" han="text-[11px]" /></div>
              </div>
              <div className="flex h-[31px] shrink-0 items-center justify-between pr-[2px] pt-[2px] text-[#b5b5b5]">
                <span className="flex items-center gap-[4px]"><span className="whitespace-pre border-b border-dashed border-[#a8a8a8] leading-[15px] tracking-[-0.28px]">4/9  MX_Ctrl_Win_Alt_1.25U</span><Svg w={6} h={4}><path d="M0 4L3 0L6 4Z" fill="#b5b5b5" /></Svg></span>
                <Pencil />
              </div>
              {models.map(([n], i) => (
                <div key={n} className="flex h-[20px] shrink-0 items-center tracking-[-0.28px]">
                  <span className="flex h-[14px] w-[14px] items-center justify-center rounded-full border border-[#303030] bg-[#525252]">{i === 3 && <span className="h-[6px] w-[6px] rounded-full bg-white" />}</span>
                  <span className="ml-[9px] flex-1">{n}</span>
                  {i === 0 && <Svg w={8} h={7}><path d="M.5 3.5L3 6L7.5 .8" stroke="#5fae5f" strokeWidth="1.3" /></Svg>}
                </div>
              ))}
            </div>
            <div className="flex h-[30px] items-center gap-[3px] font-bold tracking-[-0.5px] text-white"><Svg w={6} h={6}><path d="M5.5 0V5.5H0Z" fill="#fff" /></Svg>References</div>
          </div>
          <div className="flex flex-col items-center">
            <Svg w={8} h={4}><path d="M0 4L4 0L8 4Z" fill="#777" /></Svg>
            <span className="mt-[68px] h-[472px] w-[6px] rounded-full bg-[#757575]" />
            <Svg w={8} h={4} className="mt-[168px]"><path d="M0 0H8L4 4Z" fill="#777" /></Svg>
          </div>
        </div>
      </div>
      <div className="mt-[10px] flex h-[20px] shrink-0 bg-[#353535] pl-[3px]">
        <span className={`${tabOn} w-[78px]`}>Components</span>
        <span className={`${tabOff} w-[66px]`}>Properties</span>
      </div>
    </div>
  );
}

const menus: [string, string, string][] = [
  ["文件 (", "F", "w-[58px]"], ["编辑 (", "E", "w-[59px]"], ["视图 (", "V", "w-[60px]"], ["工程 (", "C", "w-[60px]"], ["放置 (", "P", "w-[59px]"],
  ["工具 (", "T", "w-[59px]"], ["报告 (", "R", "w-[60px]"], ["Window (", "W", "w-[87px]"], ["帮助 (", "H", "w-[60px]"],
];

export default function App() {
  const sep = "h-[13px] w-px bg-[#2e2e2e]";
  return (
    <div className="flex h-[1254px] w-[2317px] flex-col overflow-hidden bg-[#4d4d4d] font-['Open_Sans','Noto_Sans_CJK_SC',sans-serif] text-[11.5px] leading-[16px] text-[#e4e4e4]">
      <header className="flex h-[30px] shrink-0 items-start justify-between">
        <div className="flex w-[500px] items-center pl-[13px] pt-[7px]">
          <Svg w={11} h={15}><path d="M1 3.5L4 1.5C8 1.5 10 4 10 7.5C10 11 8 13.5 5 14L1 12.5M1 6.5L5 5.5M2 14V10.5L6 9.5" stroke="#b89a5e" strokeWidth="2.2" /></Svg>
          <span className="ml-[11px]"><Disk c="#7d7fc0" c2="#f1f2fb" /></span>
          <Svg w={15} h={15} className="ml-[7px]"><path d="M4 0H15V11H4Z" fill="#858585" /><path d="M0 3H12V15H0Z" fill="#8f8f8f" stroke="#4d4d4d" strokeWidth=".8" /><path d="M3 4.5H9V8H3ZM3 10.5H9V15H3Z" fill="#5a5a5a" /><path d="M5 12H6.5V15H5Z" fill="#9a9a9a" /></Svg>
          <span className="ml-[7px]"><OpenFolder /></span>
          <span className="ml-[7px]"><OpenFolder doc /></span>
          <Svg w={14} h={12} className="ml-[8px]"><path d="M1 4H8C11 4 13 6 13 10M5 .5L1.5 4L5 7.5" stroke="#7a7a7a" strokeWidth="2" /></Svg>
          <Svg w={14} h={12} className="ml-[7px]"><path d="M13 4H6C3 4 1 6 1 10M9 .5L12.5 4L9 7.5" stroke="#7a7a7a" strokeWidth="2" /></Svg>
        </div>
        <div className="flex-1 pr-[335px] pt-[8px] text-center text-[12.5px]">NutX_Keyboard_PCB_ANSI104.PrjPcb - Altium Designer (20.1.8)</div>
        <div className="flex w-[274px] items-start">
          <div className="flex h-[21px] w-[150px] items-center gap-[5px] rounded-b-[3px] bg-[#2d2d2d] pl-[8px] tracking-[-0.2px]"><Magnifier /><span>Search</span></div>
          <span className="ml-[22px] mt-[12px] h-[3px] w-[6px] bg-white" />
          <span className="ml-[28px] mt-[6px] h-[10px] w-[10px] border border-t-2 border-white" />
          <span className="ml-[14px] flex h-[22px] w-[36px] items-center justify-center bg-[#a00000]"><Cross s={9} sw={2} /></span>
        </div>
      </header>

      <div className="mx-[8px] flex h-[1216px] shrink-0 flex-col border-t border-[#2f2f2f] bg-[#424242]">
        <nav className="flex h-[29px] shrink-0 items-center pb-px pl-[10px] text-[12.5px]">
          {menus.map(([a, b, w]) => (
            <span key={a} className={`${w} shrink-0 whitespace-pre tracking-[-0.1px]`}><Mix s={a} han="text-[12.5px]" /><u className="underline-offset-2">{b}</u>)</span>
          ))}
          <span className="flex-1" />
          <span className="flex items-center pr-[7px] text-[13px]">
            <span className="flex h-[20px] w-[63px] items-center justify-center gap-[6px] rounded-[2px] bg-[#5c5c5c] text-[#cfcfcf]"><Svg w={10} h={8}><path d="M0 8C0 4 2 2.5 6 2.5V0L10 4L6 7.5V5C3 5 1.5 6 0 8Z" fill="#5ba3ec" /></Svg>Share</span>
            <span className={`${sep} ml-[6px]`} />
            <Svg w={12} h={12} className="ml-[7px]"><path d="M6 0L12 6H10.5V12H7.5V8H4.5V12H1.5V6H0Z" fill="#fff" /></Svg>
            <Svg w={12} h={12} className="ml-[11px]"><circle cx="6" cy="6" r="3.3" stroke="#fff" strokeWidth="2.4" /><circle cx="6" cy="6" r="5" stroke="#fff" strokeWidth="2" strokeDasharray="2.8 2.436" /></Svg>
            <span className={`${sep} ml-[8px]`} />
            <Svg w={14} h={12} className="ml-[7px]"><path d="M0 9C0 4 3 2 7 2L10 1L5 9L2 11ZM6 10L13 2C14 7 12 9 9 10Z" fill="#f0f0f0" /><path d="M1 12L12 0" stroke="#f0f0f0" strokeWidth="1.3" /></Svg>
            <span className={`${sep} ml-[6px]`} />
            <Svg w={14} h={14} className="ml-[8px]"><circle cx="7" cy="7" r="6.8" fill="#f2f2f2" /><circle cx="7" cy="5" r="2.4" fill="#424242" /><path d="M2.8 10.8C4 8.5 10 8.5 11.2 10.8C9 13 5 13 2.8 10.8Z" fill="#424242" /></Svg>
            <span className="ml-[7px] w-[85px] text-[#cfcfcf]">Not Signed In</span>
            <Svg w={6} h={3}><path d="M0 0H6L3 3Z" fill="#ddd" /></Svg>
          </span>
        </nav>
        <main className="flex h-[1131px] shrink-0 bg-[#353535] pl-[2px]">
          <ProjectsPanel />
          <Centre />
          <ComponentsPanel />
        </main>
        <div className="flex h-[28px] shrink-0 items-center gap-[3px] pl-[4px] pt-[4px] tracking-[-0.1px]">
          <span className={`${btn} h-[20px] w-[59px]`}>Messages</span>
          <span className={`${btn} h-[20px] w-[35px]`}><Mix s="输出" /></span>
          <span className={`${btn} h-[20px] w-[99px]`}>Storage Manager</span>
        </div>
        <div className="h-[3px] shrink-0 bg-[#353535]" />
        <footer className="flex h-[24px] shrink-0 items-center pl-[4px] pr-[5px] pt-px">
          <span className="w-[114px] tracking-[-0.27px]">X:1600.000mil Y:0mil</span>
          <span className="w-[528px] tracking-[-0.1px]">Grid:100mil</span>
          <span className="h-[17px] w-[645px] border-l border-[#2c2c2c]" />
          <span className="h-[17px] flex-1 border-l border-[#2c2c2c]" />
          <span className={`${btn} h-[18px] w-[44px]`}>Panels</span>
        </footer>
      </div>
    </div>
  );
}
